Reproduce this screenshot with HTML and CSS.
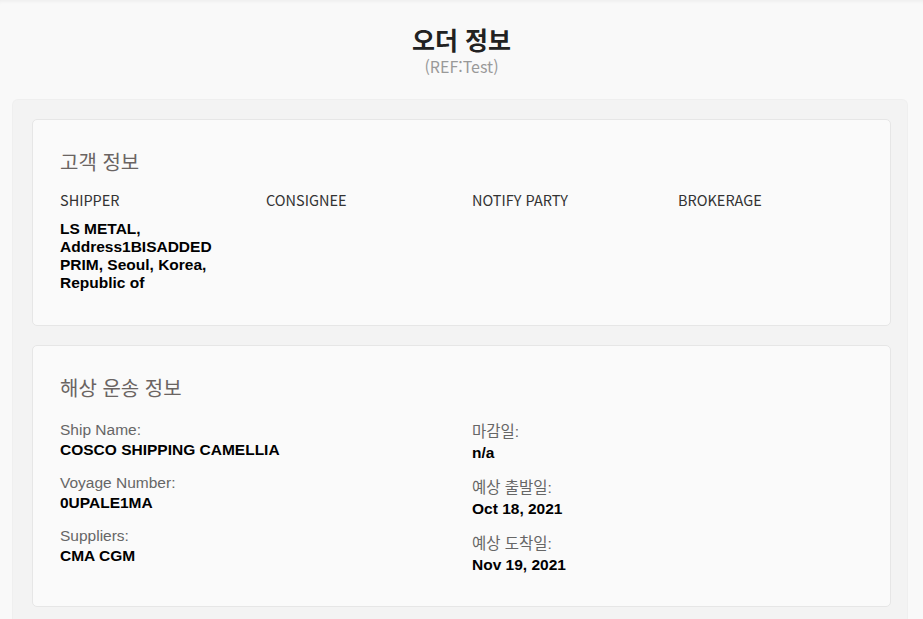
FILE: index.html
```html
<!DOCTYPE html>
<html lang="ko">
<head>
<meta charset="utf-8">
<title>오더 정보</title>
<link rel="stylesheet" href="styles.css">
</head>
<body>
<header class="page-header">
  <h1 class="page-title">오더 정보</h1>
  <div class="page-sub">(REF:Test)</div>
</header>
<main class="wrap">
  <section class="card">
    <h2 class="card-title">고객 정보</h2>
    <div class="party-grid">
      <div class="party">
        <div class="party-label">SHIPPER</div>
        <div class="party-value">LS METAL, Address1BISADDED PRIM, Seoul, Korea, Republic of</div>
      </div>
      <div class="party">
        <div class="party-label">CONSIGNEE</div>
      </div>
      <div class="party">
        <div class="party-label">NOTIFY PARTY</div>
      </div>
      <div class="party">
        <div class="party-label">BROKERAGE</div>
      </div>
    </div>
  </section>
  <section class="card card-ship">
    <h2 class="card-title">해상 운송 정보</h2>
    <div class="info-grid">
      <div class="info-col">
        <div class="item"><div class="item-label">Ship Name:</div><div class="item-value">COSCO SHIPPING CAMELLIA</div></div>
        <div class="item"><div class="item-label">Voyage Number:</div><div class="item-value">0UPALE1MA</div></div>
        <div class="item"><div class="item-label">Suppliers:</div><div class="item-value">CMA CGM</div></div>
      </div>
      <div class="info-col kr">
        <div class="item"><div class="item-label">마감일:</div><div class="item-value">n/a</div></div>
        <div class="item"><div class="item-label">예상 출발일:</div><div class="item-value">Oct 18, 2021</div></div>
        <div class="item"><div class="item-label">예상 도착일:</div><div class="item-value">Nov 19, 2021</div></div>
      </div>
    </div>
  </section>
</main>
</body>
</html>
```

FILE: styles.css
```css
* { box-sizing: border-box; }
html, body { margin: 0; padding: 0; }
body {
  background: #f9f9f9;
  font-family: "Noto Sans CJK KR", "Noto Sans", sans-serif;
  color: #333;
  box-shadow: inset 0 4px 4px -3px rgba(0,0,0,0.06);
  min-height: 619px;
}
.page-header {
  text-align: center;
  padding-top: 22px;
  margin-bottom: 24px;
}
.page-title {
  margin: 0;
  font-size: 25px;
  line-height: 34px;
  font-weight: 700;
  color: #222;
}
.page-sub {
  font-size: 16px;
  line-height: 20px;
  color: #999;
}
.wrap {
  margin: 0 16px 0 13px;
  padding: 19px 16px 19px 19px;
  background: #f3f3f3;
  border-radius: 5px 5px 0 0;
  box-shadow: 0 0 0 1px #efefef;
  display: flex;
  flex-direction: column;
  gap: 19px;
}
.card {
  background: #fafafa;
  border: 1px solid #e6e6e6;
  border-radius: 5px;
  padding: 28px 7px 33px 27px;
}
.card-ship { padding-bottom: 31px; }
.card-title {
  margin: 0 0 14px;
  font-size: 20px;
  line-height: 28px;
  font-weight: 400;
  color: #6a6462;
}
.party-grid {
  display: grid;
  grid-template-columns: repeat(4, 206px);
}
.party { padding-right: 15px; }
.party-label {
  font-size: 14.5px;
  line-height: 20px;
  color: #333;
}
.party-value {
  margin-top: 10px;
  font-family: "Liberation Sans", Arial, sans-serif;
  font-weight: 700;
  font-size: 15.5px;
  line-height: 18px;
  color: #000;
}
.info-grid {
  display: grid;
  grid-template-columns: 412px 412px;
  margin-top: 18px;
}
.info-col {
  display: flex;
  flex-direction: column;
  gap: 13px;
}
.item-label {
  font-family: "Liberation Sans", Arial, "Noto Sans CJK KR", sans-serif;
  font-size: 15.5px;
  line-height: 20px;
  color: #666;
}
.kr .item-label { line-height: 23px; }
.item-value {
  font-family: "Liberation Sans", Arial, sans-serif;
  font-weight: 700;
  font-size: 15.5px;
  line-height: 20px;
  color: #000;
}
```
